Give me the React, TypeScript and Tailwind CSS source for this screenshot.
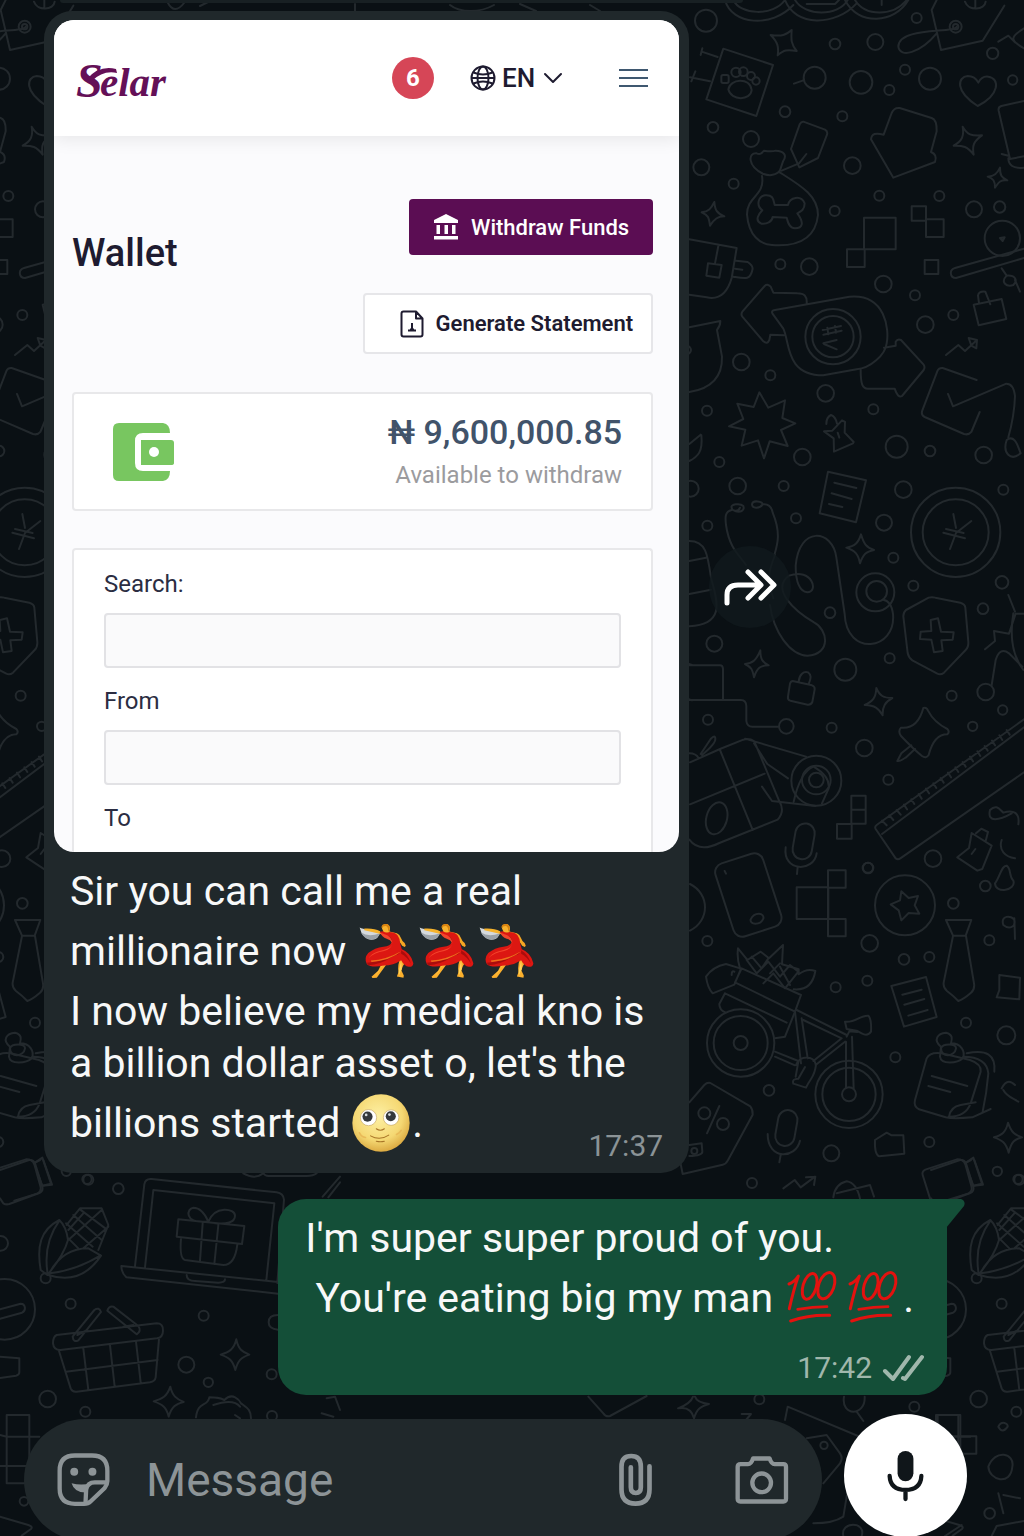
import React from "react";

/* ---------- Wallpaper ---------- */

type Dot = [number, number, number];

const skyDots: Dot[] = [
  [78, 62, 33], [465, 132, 16], [586, 126, 24], [710, 54, 15], [404, 233, 33], [543, 247, 34], [628, 270, 15],
  [675, 209, 15], [750, 236, 33], [998, 240, 14], [315, 335, 16], [487, 349, 15], [99, 382, 16], [213, 417, 24],
  [64, 502, 24], [161, 551, 15], [517, 497, 25], [598, 587, 15], [778, 588, 15], [464, 633, 15], [882, 628, 24],
  [959, 621, 17], [301, 793, 15], [388, 800, 25], [610, 852, 25], [705, 886, 15], [736, 974, 25], [820, 945, 15],
  [184, 1086, 25], [271, 1126, 15], [437, 1180, 25], [81, 1232, 15], [580, 1228, 15], [650, 1340, 33],
  [367, 1371, 25], [750, 1353, 16], [911, 1365, 25], [118, 1386, 15], [173, 1458, 25], [311, 1458, 15],
  [670, 1469, 25], [970, 1469, 15], [32, 1466, 24], [938, 160, 17],
];

const middleDots: Dot[] = [
  [82, 137, 15], [348, 115, 15], [612, 128, 24], [640, 233, 15], [700, 317, 15], [909, 386, 16], [450, 398, 16],
  [103, 491, 24], [629, 535, 15], [496, 569, 33], [815, 647, 15], [917, 636, 25], [968, 690, 14], [84, 719, 15],
  [319, 739, 22], [455, 743, 15], [878, 739, 14], [553, 804, 25], [625, 899, 15], [759, 1136, 25], [564, 1164, 16],
  [966, 307, 19],
];

const lowerDots: Dot[] = [
  [564, 23, 15], [916, 78, 16], [820, 130, 16], [82, 243, 15], [569, 250, 25], [672, 298, 16], [748, 291, 15],
  [928, 241, 15], [467, 382, 15], [562, 362, 15], [858, 488, 15], [979, 526, 27], [646, 592, 15], [267, 691, 16],
  [454, 880, 24], [748, 846, 15], [952, 934, 14], [216, 969, 15], [1014, 958, 14],
];

const floorDots: Dot[] = [
  [265, 59, 15], [355, 86, 16], [2, 250, 22], [212, 431, 15], [611, 467, 15], [559, 614, 24], [625, 667, 14],
  [143, 717, 25], [256, 755, 15], [815, 643, 15], [816, 768, 15], [72, 1024, 13],
];

function Dots({ items }: { items: Dot[] }) {
  return (
    <>
      {items.map(([x, y, r]) => (
        <circle key={`${x}-${y}`} cx={x} cy={y} r={r} />
      ))}
    </>
  );
}

function Wallpaper() {
  return (
    <svg
      className="absolute inset-0 h-full w-full"
      viewBox="0 0 1024 1536"
      preserveAspectRatio="xMidYMin slice"
      fill="none"
      stroke="#23292d"
      strokeWidth="6"
      strokeLinecap="round"
      strokeLinejoin="round"
      aria-hidden="true"
    >
      <defs>
        <g id="doodle-right">
          <g transform="translate(680 0) scale(.33333)">
            <Dots items={skyDots} />
            {/* coins on the top edge */}
            <path d="M135 0c20 75 140 85 205 15M160 0c20 45 120 50 155 0M315 0c30 80 150 80 215 10M345 0c30 50 130 50 158 0M380 12h85l12-12M495 0c40 80 150 70 190 0M525 0c30 50 115 50 155 0M605 0v15" />
            {/* price tag */}
            <path d="M770 0l-15 30 28 120 125-28 65-105M655 140c0-60 170-40 175-60M770 100c-50 60-110 75-115 40" />
            <circle cx="827" cy="80" r="18" /><circle cx="827" cy="80" r="8" />
            <path d="M855 5c10 30 60 25 62 0M886 0v24M1032 85c-40 25-45 35 0 60M955 125l30-18 20 20" />
            {/* sparkles */}
            <path d="M272 105c35 5 45 0 63-15-2 30-2 42 15 63-30-5-38-3-57 13 4-25 0-40-21-61zM848 380c15 25 25 28 58 26-25 18-30 30-25 58-18-24-32-28-60-27 25-14 32-28 27-57zM103 606c2 25 8 34 30 43-20 0-30 8-43 28-3-25-6-32-25-40 20-3 28-10 38-31zM960 503c0 22 4 30 22 38-20-2-25 4-37 22 0-20-5-28-22-33 20-2 28-8 37-27z" />
            {/* paw sign */}
            <path d="M130 146l149 49-50 153-150-50zM62 165l5-20M65 155l48 16M30 232l60 12M46 214l-12 30M145 268c5-32 65-38 70 2-3 33-62 33-70-2zM342 251l28-10" />
            <circle cx="168" cy="217" r="14" /><circle cx="190" cy="215" r="13" /><circle cx="213" cy="228" r="12" /><circle cx="228" cy="243" r="11" /><rect x="124" y="225" width="22" height="24" rx="5" />
            <path d="M893 318c-70-45-60-87-30-90 20 0 27 10 32 20 5-10 15-20 30-18 35 5 35 55-32 88z" />
            <path d="M1032 303l-68 15q-10 3-8 14l34 145 42-8M965 462l20 5M985 475c0 20 15 32 47 28" />
            {/* baked loaf */}
            <path d="M640 533l-67-115c2-18 15-20 38-14l24-65q7-17 24-15l96 30q16 5 15 40l-17 62q20 8 12 30z" />
            {/* treat bag */}
            <path d="M250 522c-50-25-45-65-20-62 10 5 15 0 22-8 18 3 25 3 35 0 25 0 35 15 22 32l-10 30q-20 18-48 8zM246 528c10 60-45 60-45 115 5 65 40 90 75 92 70 5 130-15 138-90 0-60-55-90-118-130" />
            <path d="M284 615h40c5-25 40-30 50-5 0 20-12 25-22 30 22 30 15 45-7 45-18 0-22-20-25-32l-42-2c-2 15-18 22-34 20-22-10-7-30 3-40-20-15-12-42 8-45 25-2 25 12 29 29zM305 512l52-22 22-28M370 365l65 24q9 5 6 15l-27 70-56 28-25-55 26-74q5-9 11-8z" />
            {/* pixel blocks */}
            <path d="M552 653h95v95h-95zM501 748h53v53h-53zM695 619h43v43h-43zM738 658h53v53h-53zM734 780h41v42h-41z" />
            {/* pinned card */}
            <path d="M28 718l142 26-15 90q-20 70-75 58l-52-8M115 738l-10 52M84 790l41 5-7 38-39-6zM168 782l35 4q18 12 14 24c-6 30-20 26-57 20M165 806l22 3" />
            {/* gavel */}
            <path d="M825 804l207-58M828 834l204-60M825 804c-18 5-16 30 3 30" /><circle cx="967" cy="715" r="53" /><path d="M960 714l14-2-6 11zM965 805l15 22c-20 20 0 35 20 28 15-15 5-30-20-28M1005 840l15 35" />
            {/* exchange arrows */}
            <path d="M380 912c2-25-8-32-28-32l-72-2-8-18q-10-10-18-2l-67 77q-5 8 0 15l63 74q12 10 18-4l3-16 40 2M277 940q-4-8 8-10l223-40c110-10 120 100 112 140-4 35-50 75-90 78l-100 18c-115 0-100-100-120-140zM542 1108c0 45 5 58 22 58h80q10 30 22 22l65-78q5-8 0-16l-68-74q-10-5-16 5v12l-35 6" />
            <circle cx="459" cy="1010" r="83" /><circle cx="459" cy="1010" r="62" />
            <path d="M428 990l55-12M430 1004l55-12M445 1003l-3-20M468 998l-3-20M430 1030l40-10M432 1032l38 16" />
            {/* bag and trend */}
            <path d="M881 914l84-17 14 60-83 19zM897 909l-3-22q2-14 22-12l15 38M798 1065l37-30 20 18 35-32M866 1014l25 6-2 25-15-8z" />
            <path d="M28 982l93-19q0 15-10 27l15 80q2 90-98 106M28 1040q10 10 0 20" />
            {/* ticked card */}
            <path d="M890 1140l-102-36q-11-1-15 7l-46 120q-5 14 7 20l118 51q14 4 22-6l25-60M804 1182l15 37 160-68q22 0 26 37-2 60-20 124M980 1320c20-15 30 5 42 40-30 25-55 0-42-40z" />
            {/* star burst */}
            <path d="M238 1177l27 46 50-22-8 53 39 16-43 20 20 48-54-14-17 51-18-54-49 16 11-48-49-10 43-22-18-46 49 10z" />
            <path d="M432 1294l25-2 29-31 9 5-1 32 27 28-2 4-57 25-1-40zM439 1272q0-20 14-27 14 5 18 26M473 1298l5 15" />
            <path d="M62 1304l-34 28M64 1305c5 50-10 65-36 78" />
          </g>
          <g transform="translate(680 480) scale(.33333)">
            <Dots items={middleDots} />
            <path d="M444-25l114 26-30 126-109-27zM463 8l66 16M455 40l60 17M447 72l40 9M820 40" />
            <circle cx="827" cy="157" r="134" /><circle cx="827" cy="157" r="99" />
            <path d="M820 102l8 42M874 123l-46 36M828 159l-18 48M790 158l65 17M798 147l53 12" />
            {/* stethoscope */}
            <path d="M165 93c15 5 30 0 25-15-10-10-40-5-35 5 0 10 20 15 25 0M155 90c-20 5-20 20-17 45 10 70 40 90 60 120M285 225c-20 50-25 70-5 130M248 73c-10 15-32 12-32 0 2-15 32-8 32 0zM248 73q25-3 30 25c25 60 15 95 5 127M270 375c10 80 60 150 112 152 75-5 60-80 20-100-60-35-130-100-75-140 70-25 90 50 55 50-30-5-35-50-35-80 10-120 110-110 122-25l25 170c5 130 155 110 145 0q-5-40-30-43" />
            <circle cx="586" cy="337" r="57" /><circle cx="590" cy="334" r="31" />
            <path d="M543 163c8 28 15 38 39 47-24 5-32 12-42 40-5-28-15-38-41-47 25-4 36-14 44-40zM241 511c0 25 5 35 25 45-25 0-35 8-44 36-5-25-8-30-27-40 24-3 34-12 46-41zM589 624c10 24 22 30 48 30-22 12-30 26-29 52-12-22-24-30-54-31 24-10 34-22 35-51z" />
            {/* shield */}
            <path d="M678 390l68-37q10-3 20 0l75 15q14 4 15 15l9 103q1 15-8 24l-65 68q-10 8-20 3l-75-40q-11-8-14-22l-13-110q0-12 8-19z" />
            <path d="M752 420l22-5 9 40 38 2-3 22-34 2 4 32-26 4-8-38-34-2 2-22 32-2z" />
            <path d="M28 183c50 0 55 40 65 110 15 60 50 140-65 146M28 243l50-10M28 342l65-13M28 556h92q8 0 9 10v92M28 660h155q15 0 16 18v45q2 17 18 17h78M22 550l14 5M22 656l14 5" />
            {/* lock */}
            <path d="M338 603l58 13q9 3 8 12l-7 38q-4 9-14 8l-52-12q-9-3-7-13l6-38q3-8 8-8zM356 605c2-22 15-32 28-28 10 8 10 15 2 35" />
            {/* push pin */}
            <path d="M730 684q10-3 14 8 18 35 58 55 8 8 0 16-40 0-56 62-8 12-20 3-25-20-63-60-10-15 0-25 50 5 67-59zM694 796l-30 24-12 23c10 2 15-5 25-10l28-26M915 508l30-25-3-30 45 8 20-60 25 0M1000 400c-10 60-8 120 30 170M935 615l12-75q12-40 40-20l40 40M985 345l20 50" />
            {/* gift parcel */}
            <path d="M30 847l90-40 70-28q18-5 33 5l75 180q18 30-5 55l-175 70q-60 30-90-10M120 810l98 240M30 973l224-92M62 822l30-45q14-15 14 0 0 15-40 48zM28 820q20 0 28 15M195 776l183 54M222 790l40 62 62 43M246 920l30 43 130 15M341 965q20-90 60-105 50 30 45 65l-20 45" />
            <ellipse cx="110" cy="1015" rx="31" ry="49" transform="rotate(15 110 1015)" />
            <circle cx="409" cy="902" r="75" /><circle cx="409" cy="900" r="43" /><circle cx="409" cy="900" r="22" />
            <path d="M514 947h43v42h-43zM514 989h43v42h-43zM471 1032h44v44h-44z" />
            {/* ruler */}
            <path d="M1032 718L590 1035q-7 5-3 12l60 88q7 5 14 0l371-258M1032 742L606 1062M606 1022l14 14M628 1006l12 14M650 990l12 14M672 974l9 14M694 958l9 14M716 942l9 14M738 926l9 14M760 910l9 14M782 894l9 14M804 878l9 14M826 862l9 14M848 846l9 14M870 830l9 14M892 814l9 14M914 798l9 14M936 782l9 14M958 766l9 14M980 750l9 14" />
            <rect x="342" y="1030" width="58" height="108" rx="29" transform="rotate(10 371 1084)" />
            <path d="M317 1102c-10 75 85 75 93 18M353 1160l-2 22" />
            <path d="M832 1132l35-28 8-45 60 38-28 70-15 5zM888 1060l16-14 20 10-7 27M875 1122l11-15M930 990c20-20 30 0 40 8 30-10 50 0 45 35M965 1080c-10 30 10 50 40 55M930 990c-10 40 30 30 65 10" />
          </g>
          <g transform="translate(680 860) scale(.33333)">
            <Dots items={lowerDots} />
            <rect x="130" y="-10" width="150" height="230" rx="28" transform="rotate(-18 205 105)" />
            <path d="M134 33l4 8M212 178c12-24 42-20 38-2-10 22-42 18-38 2z" />
            <path d="M30 72c60 30 60 110 0 140M350 82h95v95h-95zM444 31h53v52h-53zM444 177h53v52h-53zM444 83v94" />
            <circle cx="675" cy="136" r="90" />
            <path d="M664 94l22 20 28-6-10 28 14 25-32-2-22 22-8-30-24-18 28-12z" />
            {/* neck tie */}
            <path d="M798 180h76l-17 47h-38zM819 228l-28 140q-2 15 10 25 20 15 34 30 15-5 38-25 12-10 9-28l-24-142M634 378l104-27 32 120-98 29zM667 404l58-15M673 434l60-17M685 467l58-17" />
            <path d="M945 70c15-20 20-55 35-53 15 10 5 30 20 45 10 30-55 40-55 8zM970 195c-10-30 25-30 33-15 5 20-15 30-33 15zM1003 175l2 62M958 345l62 8-2 65-68-6 8-22z" />
            {/* delivery bicycle */}
            <circle cx="182" cy="549" r="101" /><circle cx="182" cy="549" r="81" /><circle cx="182" cy="549" r="21" />
            <circle cx="507" cy="703" r="101" /><circle cx="507" cy="703" r="80" /><circle cx="507" cy="703" r="21" />
            <path d="M185 325l178 80-18 50-180-88zM135 400l-17 32q0 18 18 25M345 455l-30 75-30 5M135 400l185 88M98 400q-15-15-20-50 20-30 60-38l45 14-20 48zM155 345q0-15 8-10" />
            <path d="M345 455l18 155M365 475l18 120M350 450l150 75M370 480l115 55-85 68M495 545l-88 70M498 545v140M516 530l5 155M285 575l70 28M285 590l60 26M495 485c30 5 45-20 70-18q10 10 8 48-10 15-28 5l-15-8-30-5zM500 530l8-16 24 2M348 615c10-30 55-30 60 0-5 40-15 35-30 68l-38-12q-5-15 15-15l20-35M355 605l-8 45" />
            <path d="M180 325q-10-30-6-60l28 35 40-25 25 20 42-40-3 58 50 15v15q25-20 50-10-10 60-65 55M200 300l30 40 35-35 35 45 30-35 25 20-40 50-35-45-30 30M215 290l30 35 20-30M300 320l30 55M270 340l30-30" />
            {/* discount tag */}
            <path d="M28 727l45-52q8-8 18-6l120 70q8 10 7 25l-75 138q-5 10-15 12L8 942l-8-40M28 855l37-5 2 25q0 12-39 13" /><circle cx="73" cy="760" r="18" /><circle cx="129" cy="792" r="18" /><circle cx="43" cy="873" r="9" /><path d="M118 738l-37 82" />
            <rect x="290" y="750" width="58" height="108" rx="29" transform="rotate(10 319 804)" />
            <path d="M263 822c0 80 85 75 97 20M302 885l-4 22M310 985l34-25 18 22 43-32M378 952l28-2-4 25" />
            {/* satchel */}
            <path d="M785 580q-35-5-45 15l-35 125q-5 20 12 28l80 24q22 5 80 0l55-25M785 580l85 20q35 12 32 35l-30 95q-15 40-65 40 5-30 35-35l45-8M850 590q70 0 75 50-5 60-17 115M860 580q90-20 83 55M755 648l107 30M745 678l66 18" />
            <path d="M783 560c-25-20-10-40 15-42 22 5 18 20 15 32 30 0 45 25 35 45-15 15-65 20-68-5zM783 565c5-15 45-15 45 0-3 25-45 30-45 0" />
            <path d="M585 840l35-22 15 8 35 0 3 55-75 8q-15-5-13-49zM728 945q-3-10 8-16l95-31q20 0 25 15l18 65q5 15-8 22l-70 22M728 945l22 70M855 910l25-17 26 78-26 6zM460 1012q5-40 40-48 30 5 40 52M470 1000l100-25 12 35" />
            <path d="M984 788c10 30 20 36 42 44-22 6-32 12-40 46-8-30-20-38-44-46 24-6 36-16 42-44zM965 685c15-30 30-20 40-10M970 690c10 20 30 25 45 35" />
          </g>
        </g>
        <g id="doodle-floor" transform="translate(0 1160) scale(.33333)">
          <Dots items={floorDots} />
          <path d="M0 115l10 15q8 5 18 2l90-33q12-5 9-18L105 10q-5-12-18-10L0 30M105 8l15-8M128 77l28-3L130 0" />
          {/* corn */}
          <path d="M178 180C120 210 110 260 122 330l20 15q50-60 62-105-5-40-26-60zM178 182q-50 70-35 160M145 345q40-80 120-80l38 22q-60 90-158 58zM150 340q80-10 152-54M200 195l40-50 65 0 20 50-30 75M205 235l30 30M198 190l80 70M220 165l85 75M240 148l80 60M250 265l75-65M205 240l100-90M205 210l45-50" />
          <circle cx="137" cy="355" r="15" />
          {/* laptop with gift */}
          <path d="M405 318l28-245q3-18 22-16l375 40q20 3 22 22l-20 250M435 322l25-232 363 40-24 230M364 318l470 48M364 318q0 20 15 34l455 49M560 345q0 18 25 18l70 5q20 0 20-10" />
          <path d="M535 178l198 20-7 54-196-22zM543 236q-5 60 12 64l115 15q35 0 42-62M608 190l-8 112M655 195l-12 117M620 185c-70 5-60-40-40-42 25 0 40 30 45 42 20-50 80-40 80-18 0 20-25 27-65 22" />
          <circle cx="14" cy="448" r="91" /><path d="M0 448l62-17c14 0 18 20 4 27L0 476M0 590l58 5v42q0 8-10 10l-48 7" />
          {/* shopping basket */}
          <path d="M170 525l300-35q20 0 19 22 0 20-18 23l-290 35q-20 0-22-20 0-20 11-25zM177 573l35 112q5 12 18 10l220-28q15-3 17-15l10-115M198 635l275-35M250 565l15 125M330 555l14 125M408 545l14 122M218 530l65-80q14-10 20 6l-68 85q-15 8-17-11zM322 452q5-15 18-12l75 58q10 15-5 25zM232 525l30-15M370 500l30-5" />
          <path d="M709 538c6 30 18 38 39 46-24 8-34 16-42 46-8-30-20-38-44-46 26-8 40-16 47-46zM511 680c6 28 18 36 40 46-24 6-36 14-45 44-6-28-20-38-45-46 26-8 40-14 50-44z" />
          <path d="M588 772c5-50 35-30 40-60 20 0 30 0 45 8 25-25 45 0 50 10 20 15 30 20 30 45M640 735q60-20 80 5M705 765l15 10M20 765h68v205H20zM0 825l20 5h68l30 0M0 918h88M0 1070l85 25q15 5 8 12l-28 20" />
          <path d="M968 110l52-60M985 112l35-45M730 40q35 20 60 0 5 8 15 8h115q20 0 30-8M980 715l25-5 15 40M965 760l35 10M834 465q-28 0-28 22 0 20 28 22" />
        </g>
      </defs>
      <use href="#doodle-right" />
      <use href="#doodle-right" x="-931" />
      <use href="#doodle-floor" />
      <use href="#doodle-floor" x="931" />
      {/* doodles around the composer */}
      <g transform="translate(580 1190) scale(.33333)">
        <path d="M25 620l45 50q8 12 20 8l110-60M345 620c5 15 20 20 42 22-26 8-36 14-45 43-6-25-22-35-48-30 28-10 40-20 45-35M485 672h28l-15 18M615 690l8-40 240 100M680 745l60-10 40 55q10 15 0 30l-50 60M700 1000q60 0 90-20l15-90" />
        <circle cx="538" cy="628" r="15" /><circle cx="1003" cy="650" r="15" /><circle cx="732" cy="766" r="11" />
        <path d="M792 620c-10 60 65 60 62 0M830 665l20 28M1068 675h67v64h-67zM1135 739h54v52h-54zM1225 830c20-55 80-40 72 0-5 60-70 40-72 0zM1255 710c10-20 30-10 28 0-10 15-20 15-28 0zM790 1038c-10-45 70-45 55 0M1235 1038l15-30 82-15M1145 1005l-50 33M1255 910l15 60M1270 915l50 10" />
        <circle cx="1229" cy="970" r="16" />
      </g>
      <path d="M168 3c4 8 10 8 16 0M200 6l8-4M355 4v7M450 5c10 8 30 8 44 0M520 4l16 7M590 5l10 6" strokeWidth="2" />
    </svg>
  );
}

/* ---------- Emoji ---------- */

function Dancer() {
  return (
    <svg viewBox="58 60 174 176" className="mr-0.5 inline-block h-[58px] w-[58px] align-middle" role="img" aria-label="dancer">
      <path d="M62 77q8 4 28 8l34 6q-4 22-26 23Q70 112 62 77z" fill="#d5d9dc" />
      <path d="M66 92q22 14 57 3-6 18-27 19-20-2-30-22z" fill="#9ba2a8" />
      <path d="M76 80q30-2 48 8l4 9q-24-6-52-12z" fill="#f6b32c" />
      <path d="M149 88l26 6q9 3 12 14l5 10q9 6 10 14l-3 4-8-4-13-20-28-12z" fill="#f5a623" />
      <path d="M132 180l-14 28-20 18 3 4 13-1 32-44zM186 168q-10 24-6 44l-5 13 20 4 1-7-7-14q3-18 13-26l0-14z" fill="#fbb02d" />
      <path d="M136 180l-14 28-14 16 30-40zM188 176l2 26-8 18-2-8z" fill="#ffd45c" />
      <path d="M122 91q12-6 24 0 20-2 31 9 8 10 8 26l5 17q27 10 35 42-1 12-14 11-14-2-23-20-24 16-52 16-38 8-52-4-10-18 4-34 20-16 46-19 22-2 26-16 0-12-16-18-15-4-22-10z" fill="#dc1712" />
      <path d="M124 92l22 8q14 8 15 22-2 20-24 26-30 4-48 22 8-14 26-20 22-4 34-10 12-6 11-18-4-8-16-11-15-6-20-19z" fill="#f4452c" />
      <path d="M84 184q42-4 66-17 22-12 46-14-28 6-44 18-26 18-64 20zM188 146q20 12 30 40-14-22-30-30z" fill="#a90d0d" />
      <path d="M96 177q46-2 92-28-32 28-90 32z" fill="#f0701c" />
      <path d="M130 80q0-13 11-14 13 0 13 14l-2 10q-10 4-18-1z" fill="#f9b32d" />
      <path d="M128 78q0-13 13-12 13 0 12 15l-5 9q2-15-6-18-8-1-14 6z" fill="#d98310" />
    </svg>
  );
}

function RollingEyes() {
  return (
    <svg viewBox="0 0 172 172" className="inline-block h-[58px] w-[58px] align-middle" role="img" aria-label="face looking up">
      <defs>
        <radialGradient id="skin" cx="45%" cy="38%" r="65%">
          <stop offset="0" stopColor="#fdf0a4" />
          <stop offset=".65" stopColor="#f5d873" />
          <stop offset="1" stopColor="#d9a53c" />
        </radialGradient>
      </defs>
      <circle cx="86" cy="86" r="85" fill="url(#skin)" />
      <circle cx="49" cy="70" r="24" fill="#fff" stroke="#c8a867" strokeWidth="2" />
      <circle cx="116" cy="70" r="23" fill="#fff" stroke="#c8a867" strokeWidth="2" />
      <circle cx="46" cy="67" r="15" fill="#34383c" />
      <circle cx="115" cy="66" r="15" fill="#34383c" />
      <circle cx="42" cy="62" r="4" fill="#d5dade" />
      <circle cx="111" cy="61" r="4" fill="#d5dade" />
      <path d="M72 103q12 9 24 0M55 124q27 16 54-2M72 140q12 3 24 0" stroke="#a87527" strokeWidth="3" fill="none" strokeLinecap="round" />
      <path d="M22 115q6 12 18 14M132 120q10-4 14-12" stroke="#e9ba58" strokeWidth="5" fill="none" strokeLinecap="round" />
    </svg>
  );
}

function Hundred() {
  return (
    <svg viewBox="618 235 183 165" className="-mt-1 inline-block h-[55px] w-[61px] align-middle" role="img" aria-label="hundred points" fill="none" stroke="#e3120f" strokeLinecap="round" strokeLinejoin="round">
      <path d="M630 280q16-6 28-24-14 40-27 98" strokeWidth="9" />
      <ellipse cx="692" cy="287" rx="20" ry="40" transform="rotate(17 692 287)" strokeWidth="9" />
      <ellipse cx="742" cy="285" rx="23" ry="41" transform="rotate(20 742 285)" strokeWidth="9" />
      <path d="M656 356q44-8 88-8" strokeWidth="8" />
      <path d="M635 391q54-19 117-17" strokeWidth="9" />
    </svg>
  );
}

/* ---------- Wallet page shown in the photo ---------- */

function SelarLogo() {
  return (
    <svg viewBox="0 0 100 60" className="h-[60px] w-[100px]" role="img" aria-label="Selar" fill="#641057">
      <text x="4" y="49" fontFamily="Liberation Serif, serif" fontStyle="italic" fontWeight="700" fontSize="48">S</text>
      <text x="28" y="48" fontFamily="Liberation Serif, serif" fontStyle="italic" fontWeight="700" fontSize="41">elar</text>
      <path d="M15 31Q27 17 44 21l1 4Q31 22 20 33z" />
    </svg>
  );
}

function Globe() {
  return (
    <svg viewBox="0 0 26 26" className="h-[26px] w-[26px]" fill="none" stroke="#1e1b30" strokeWidth="2" aria-hidden="true">
      <circle cx="13" cy="13" r="11.5" />
      <ellipse cx="13" cy="13" rx="5.5" ry="11.5" />
      <path d="M1.5 13h23M3.5 7.5q9.500 4 19 0M3.500 18.500q9.500-4 19 0" />
    </svg>
  );
}

function WalletPage() {
  return (
    <div className="overflow-hidden rounded-[20px] bg-[#fbfbfd] text-[#1e1b30]">
      <header className="relative flex h-[116px] items-center bg-white pr-[31px] pl-[18px] shadow-[0_4px_16px_rgba(0,0,0,0.08)]">
        <a href="#home"><SelarLogo /></a>
        <span className="ml-auto flex h-[42px] w-[42px] items-center justify-center rounded-full bg-[#d64657] text-2xl font-bold text-white">6</span>
        <button type="button" className="ml-9 flex items-center gap-1.5 text-[26px] leading-8 font-medium">
          <Globe />
          EN
          <svg viewBox="0 0 20 12" className="ml-0.5 h-3 w-5" fill="none" stroke="currentColor" strokeWidth="2" strokeLinecap="round" strokeLinejoin="round" aria-hidden="true">
            <path d="M2 2l8 8 8-8" />
          </svg>
        </button>
        <button type="button" aria-label="Menu" className="ml-14 flex w-[29px] flex-col gap-1.5">
          <span className="h-0.5 bg-[#3f5870]" />
          <span className="h-0.5 bg-[#3f5870]" />
          <span className="h-0.5 bg-[#3f5870]" />
        </button>
      </header>

      <div className="pt-[63px] pr-[26px] pl-[18px]">
        <div className="flex justify-between">
          <h1 className="mt-8 text-[38px] leading-[44px] font-medium">Wallet</h1>
          <div className="flex flex-col items-end gap-[38px]">
            <button type="button" className="flex h-14 items-center gap-3 rounded bg-[#5b0d53] px-6 text-[22px] font-medium text-white">
              <svg viewBox="0 0 26 26" className="h-[26px] w-[26px]" fill="currentColor" aria-hidden="true">
                <path d="M13 0l12 6v3H1V6zM3.500 11H7v9H3.500zM11.500 11H15v9h-3.500zM19 11h3.500v9H19zM1 22h24v3.500H1z" />
              </svg>
              Withdraw Funds
            </button>
            <button type="button" className="flex h-[61px] items-center gap-3 rounded border-2 border-[#e6e6e9] bg-white pr-[18px] pl-[35px] text-[22px] font-semibold">
              <svg viewBox="0 0 24 28" className="h-7 w-6" fill="none" stroke="currentColor" strokeWidth="2" strokeLinejoin="round" aria-hidden="true">
                <path d="M3.500 1.500H16l6.500 7v16q0 2-2 2h-17q-2 0-2-2v-21q0-2 2-2zM16 1.500v7h6.500M12 13v7M8 20.500h8M10.500 18.500l1.500 1.500 1.500-1.500" />
              </svg>
              Generate Statement
            </button>
          </div>
        </div>

        <section className="mt-[38px] flex h-[119px] items-center justify-between rounded border-2 border-[#e8e8ea] bg-white pr-[29px] pl-[39px]">
          <svg viewBox="0 0 61 58" className="h-[58px] w-[61px]" aria-hidden="true">
            <path d="M6 0h44q7 1 7 10H30q-8 0-8 8v22q0 8 8 8h27q0 9-7 10H6q-6 0-6-6V6q0-6 6-6z" fill="#78c660" />
            <path d="M28 17h30q3 0 3 3v20q0 2-3 2H28z" fill="#78c660" />
            <circle cx="41" cy="29" r="5" fill="#fff" />
          </svg>
          <div className="text-right">
            <p className="text-[34px] leading-10 font-medium text-[#41536a]">₦ 9,600,000.85</p>
            <p className="mt-[7px] text-2xl leading-8 text-[#9b9b9e]">Available to withdraw</p>
          </div>
        </section>

        <form className="mt-[37px] rounded-t border-2 border-b-0 border-[#e8e8ea] bg-white px-[30px] pt-5 pb-5 text-2xl leading-7 text-[#2b2d42]">
          <label htmlFor="search" className="block">Search:</label>
          <input id="search" className="mt-[15px] block h-[55px] w-full rounded border-2 border-[#e2e2e5] bg-[#fafafb] px-3" />
          <label htmlFor="from" className="mt-[19px] block">From</label>
          <input id="from" className="mt-[15px] block h-[55px] w-full rounded border-2 border-[#e2e2e5] bg-[#fafafb] px-3" />
          <p className="mt-[19px]">To</p>
        </form>
      </div>
    </div>
  );
}

/* ---------- Conversation ---------- */

function ReceivedMessage() {
  return (
    <article className="relative mt-[11px] ml-11 w-[63%] rounded-[28px] bg-[#20282b] px-2.5 pt-[9px] pb-[11px]">
      <WalletPage />
      <div className="mt-[13px] px-4 text-[41px] leading-[52px] whitespace-nowrap text-[#f7f8f8]">
        <p>Sir you can call me a real</p>
        <p className="flex h-[68px] items-center">
          <span className="mr-3">millionaire now</span>
          <Dancer /><Dancer /><Dancer />
        </p>
        <p>I now believe my medical kno is</p>
        <p>a billion dollar asset o, let's the</p>
        <div className="flex h-[73px] items-start justify-between">
          <p className="flex h-[68px] items-center">
            <span className="mr-3">billions started</span>
            <RollingEyes />
            <span className="ml-0.5">.</span>
          </p>
          <time className="self-end text-3xl leading-8 text-[#8b9396]">17:37</time>
        </div>
      </div>
      <button type="button" aria-label="Forward" className="absolute top-[535px] left-full ml-5 flex h-[82px] w-[82px] items-center justify-center rounded-full bg-[#10191d]/80">
        <svg viewBox="0 0 54 38" className="h-[38px] w-[54px]" fill="none" stroke="#fff" strokeWidth="5" strokeLinecap="round" strokeLinejoin="round" aria-hidden="true">
          <path d="M4 35v-8q0-10 11-10h21M25 4l13 13-13 13M38 4l13 13-13 13" />
        </svg>
      </button>
    </article>
  );
}

function SentMessage() {
  return (
    <article className="relative mt-[26px] mr-[77px] ml-auto w-fit rounded-[28px] rounded-tr-none bg-[#144f38] pt-[13px] pr-[23px] pb-[11px] pl-[27px]">
      <svg viewBox="0 0 19 29" className="absolute top-0 left-full -ml-px h-[29px] w-[19px]" fill="#144f38" aria-hidden="true">
        <path d="M0 0h15q5 2 3 7L0 29z" />
      </svg>
      <div className="pr-2.5 text-[41px] leading-[52px] whitespace-nowrap text-[#f7f8f8]">
        <p>I'm super super proud of you.</p>
        <p className="flex h-[68px] items-center">
          <span className="mr-3 whitespace-pre"> You're eating big my man</span>
          <Hundred /><Hundred />
          <span className="-ml-1">.</span>
        </p>
      </div>
      <div className="mt-5 flex items-center justify-end gap-2.5 text-3xl leading-8 text-[#a0b7ac]">
        <time>17:42</time>
        <svg viewBox="0 0 42 28" className="h-7 w-[42px]" fill="none" stroke="currentColor" strokeWidth="4" strokeLinecap="round" strokeLinejoin="round" aria-label="Delivered">
          <path d="M3 17l8 8L27 3M21 24l2 1L40 3" />
        </svg>
      </div>
    </article>
  );
}

function Composer() {
  return (
    <form className="mt-[19px] flex items-start gap-[22px] pr-[57px] pl-6 text-[#8d9497]">
      <div className="mt-[5px] flex h-[122px] min-w-0 flex-1 items-center rounded-full bg-[#20282b] pr-[33px] pl-[33px]">
        <button type="button" aria-label="Stickers">
          <svg viewBox="172 878 160 162" className="h-[54px] w-[53px]" fill="none" stroke="currentColor" strokeWidth="13" strokeLinejoin="round" aria-hidden="true">
            <path d="M226 885h52q46 0 46 46v32q0 10-8 20l-42 40q-8 8-20 8h-28q-46 0-46-46v-54q0-46 46-46z" />
            <path d="M322 966h-36q-22 0-26 22l-2 42" />
            <circle cx="224" cy="934" r="12" fill="currentColor" stroke="none" />
            <circle cx="279" cy="934" r="12" fill="currentColor" stroke="none" />
            <path d="M216 969q30 8 64-1-16 10-22 29-34 0-42-28z" fill="currentColor" stroke="none" />
          </svg>
        </button>
        <input aria-label="Message" placeholder="Message" className="ml-9 min-w-0 flex-1 bg-transparent text-[46px] leading-[56px] outline-none placeholder:text-[#8d9497]" />
        <button type="button" aria-label="Attach">
          <svg viewBox="118 788 104 162" className="h-[54px] w-[35px]" fill="none" stroke="currentColor" strokeWidth="14" strokeLinecap="round" strokeLinejoin="round" aria-hidden="true">
            <path d="M212 828v69q0 43-42 43t-42-43v-68q0-32 29-32t29 32v62q0 17-15 17t-15-17v-60" />
          </svg>
        </button>
        <button type="button" aria-label="Camera" className="ml-[82px]">
          <svg viewBox="466 796 162 146" className="h-[49px] w-[54px]" fill="none" stroke="currentColor" strokeWidth="13" strokeLinejoin="round" aria-hidden="true">
            <path d="M483 820h22q10 0 15-17h50q5 17 15 17h26q8 0 8 8v96q0 8-8 8H482q-8 0-8-8v-96q0-8 9-8z" />
            <circle cx="546" cy="876" r="28" />
          </svg>
        </button>
      </div>
      <button type="button" aria-label="Record voice message" className="flex h-[123px] w-[123px] shrink-0 items-center justify-center rounded-full bg-white">
        <svg viewBox="922 780 112 156" className="h-[52px] w-[37px]" fill="none" stroke="#10161a" strokeWidth="13" strokeLinecap="round" aria-hidden="true">
          <rect x="954" y="782" width="48" height="92" rx="24" fill="#10161a" stroke="none" />
          <path d="M930 858q2 42 48 42t48-42M978 902v26" />
        </svg>
      </button>
    </form>
  );
}

export default function App() {
  return (
    <main className="relative h-screen overflow-hidden bg-[#0a1014] font-[Roboto,sans-serif]">
      <Wallpaper />
      <div className="relative">
        <div className="absolute top-0 left-[60px] h-[3px] w-2/3 rounded-b-full bg-[#182023]" />
        <div className="flex flex-col">
          <ReceivedMessage />
          <SentMessage />
          <Composer />
        </div>
      </div>
    </main>
  );
}
